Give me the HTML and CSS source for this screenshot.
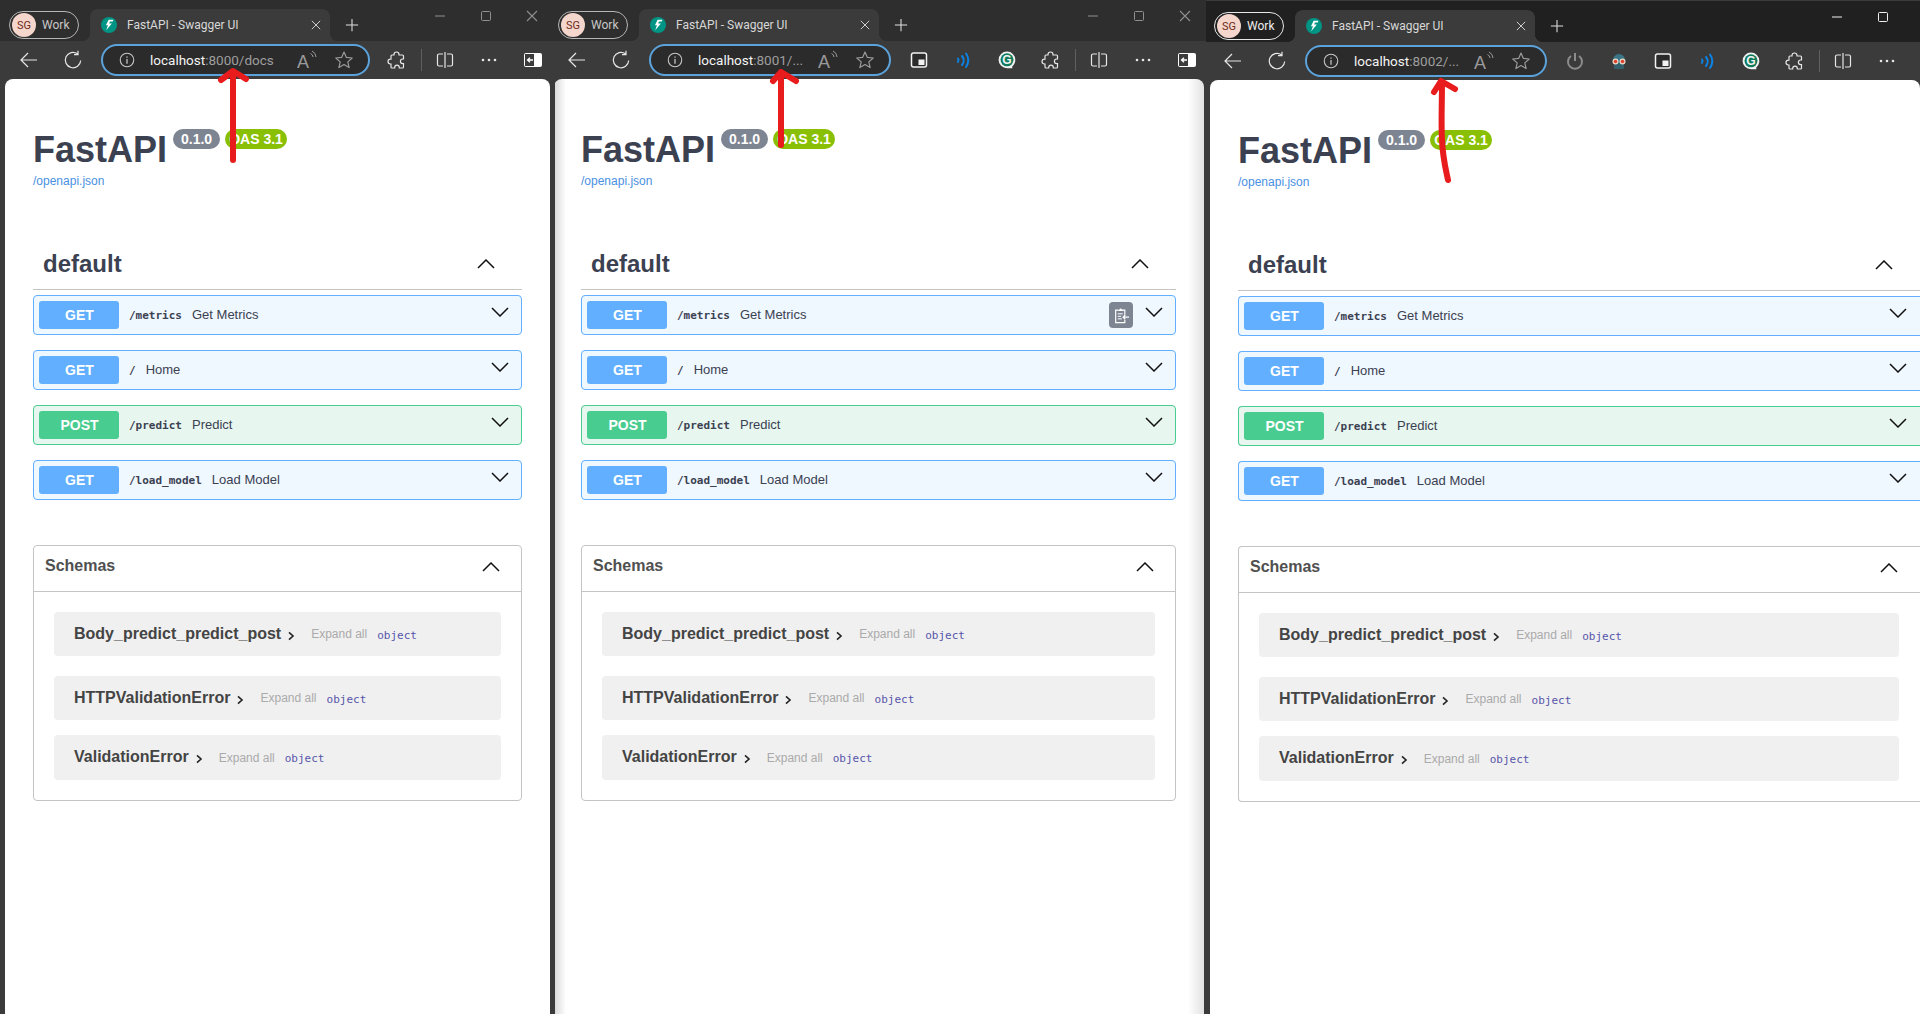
FILE: index.html
```html
<!doctype html>
<html>
<head>
	<meta charset="utf-8" />
	<title>FastAPI - Swagger UI</title>
	<link rel="stylesheet" href="styles.css">
</head>

<body>
	<svg class="sprite" xmlns="http://www.w3.org/2000/svg">
		<symbol id="i-back" viewBox="0 0 20 20"><path d="M18 10H2M9 3l-7 7 7 7" fill="none" stroke="currentColor" stroke-width="1.2"/></symbol>
		<symbol id="i-refresh" viewBox="0 0 20 20"><path d="M17.700 10.500A7.700 7.700 0 1 1 14.500 3.800M15 .8v3.800h-4" fill="none" stroke="currentColor" stroke-width="1.2"/></symbol>
		<symbol id="i-info" viewBox="0 0 20 20"><circle cx="10" cy="10" r="7.5" fill="none" stroke="currentColor" stroke-width="1.2"/><path d="M10 9v5.2M10 6v1.4" stroke="currentColor" stroke-width="1.4"/></symbol>
		<symbol id="i-read" viewBox="0 0 20 20"><text x="0" y="18" font-family="Liberation Sans" font-size="18" fill="currentColor">A</text><path d="M13.5 3.5a4 4 0 0 1 2.5 3.5M15 1a7 7 0 0 1 4 6" fill="none" stroke="currentColor"/></symbol>
		<symbol id="i-star" viewBox="0 0 20 20"><path d="M10 2l2.4 5.4 5.8.6-4.4 3.9 1.3 5.7L10 14.6l-5.1 3 1.3-5.7L1.800 8l5.800-.6z" fill="none" stroke="currentColor" stroke-width="1.2" stroke-linejoin="round"/></symbol>
		<symbol id="i-puzzle" viewBox="0 0 20 20"><path d="M7 4.500a2.500 2.500 0 0 1 5 0V5h3.500a1 1 0 0 1 1 1v3h-.8a2.300 2.300 0 0 0 0 4.600h.8V17a1 1 0 0 1-1 1h-3.200v-.6a2.300 2.300 0 0 0-4.600 0v.6H5a1 1 0 0 1-1-1v-3h-.6a2.400 2.400 0 0 1 0-4.800H4V6a1 1 0 0 1 1-1h2z" fill="none" stroke="currentColor" stroke-width="1.200"/></symbol>
		<symbol id="i-split" viewBox="0 0 20 20"><path d="M8 4H4a1.500 1.500 0 0 0-1.500 1.500v9A1.500 1.500 0 0 0 4 16h4M12 4h4a1.500 1.500 0 0 1 1.500 1.500v9A1.500 1.500 0 0 1 16 16h-4M10 2v16" fill="none" stroke="currentColor" stroke-width="1.200"/></symbol>
		<symbol id="i-dots" viewBox="0 0 20 20"><circle cx="4" cy="10" r="1.300" fill="currentColor"/><circle cx="10" cy="10" r="1.300" fill="currentColor"/><circle cx="16" cy="10" r="1.300" fill="currentColor"/></symbol>
		<symbol id="i-sidebar" viewBox="0 0 20 20"><rect x="1" y="3" width="18" height="14" rx="2" fill="#fff"/><rect x="2" y="4" width="9" height="12" fill="#3b3b3b"/><path d="M10 10H4.500M7 7.800 4.500 10 7 12.200" fill="none" stroke="#fff" stroke-width="1.300"/></symbol>
		<symbol id="i-pip" viewBox="0 0 20 20"><rect x="2.500" y="3" width="15" height="14" rx="2" fill="#2b2b2b" stroke="#f2f2f2" stroke-width="1.500"/><rect x="9.500" y="9.500" width="6" height="5.500" fill="#f2f2f2"/></symbol>
		<symbol id="i-wifi" viewBox="0 0 20 20"><path d="M5 8.500a3 3 0 0 1 0 3.500M9 6a7 7 0 0 1 0 9M13 3.500a11 11 0 0 1 0 13.500" fill="none" stroke="#0a84e8" stroke-width="2" stroke-linecap="round"/></symbol>
		<symbol id="i-grammarly" viewBox="0 0 20 20"><path d="M10 1.500a8.300 8.300 0 0 1 8.300 8.300 8.300 8.300 0 0 1-3 6.500v2H10a8.400 8.400 0 0 1 0-16.800z" fill="#f2f2f2"/><circle cx="10" cy="9.800" r="6.500" fill="#0f7a5c"/><text x="10" y="14" text-anchor="middle" font-family="Liberation Sans" font-weight="700" font-size="12" fill="#f2f2f2">G</text></symbol>
		<symbol id="i-power" viewBox="0 0 20 20"><path d="M6 5a7 7 0 1 0 8 0M10 2v8" fill="none" stroke="#8c8c8c" stroke-width="2"/></symbol>
		<symbol id="i-robot" viewBox="0 0 20 20"><path d="M4 9a6 6 0 0 1 12 0v3H4z" fill="#3a7486"/><rect x="5" y="12" width="10" height="6" rx="1" fill="#335e6c"/><circle cx="6.500" cy="10.500" r="3" fill="#e8dccb"/><circle cx="13.500" cy="10.500" r="3" fill="#e8dccb"/><circle cx="6.500" cy="10.500" r="1.800" fill="#e0432b"/><circle cx="13.500" cy="10.500" r="1.800" fill="#e0432b"/></symbol>
		<symbol id="i-fastapi" viewBox="0 0 20 20"><circle cx="10" cy="10" r="10" fill="#009485"/><path d="M9.500 3.500h6l-.8 2.200h-3.600l-.8 2.400h3.300L6.500 16.500l2.200-6.300H6.200z" fill="#fff"/></symbol>
		<symbol id="i-x" viewBox="0 0 12 12"><path d="M1 1l10 10M11 1 1 11" stroke="currentColor" stroke-width="1.100"/></symbol>
		<symbol id="i-plus" viewBox="0 0 16 16"><path d="M8 1v14M1 8h14" stroke="currentColor" stroke-width="1.200"/></symbol>
		<symbol id="i-min" viewBox="0 0 12 12"><path d="M1 6h10" stroke="currentColor"/></symbol>
		<symbol id="i-max" viewBox="0 0 12 12"><rect x="1.500" y="1.500" width="9" height="9" rx="1" fill="none" stroke="currentColor"/></symbol>
		<symbol id="i-down" viewBox="0 0 18 10"><path d="M1 1l8 8 8-8" fill="none" stroke="currentColor" stroke-width="1.500"/></symbol>
		<symbol id="i-up" viewBox="0 0 18 10"><path d="M1 9l8-8 8 8" fill="none" stroke="currentColor" stroke-width="1.500"/></symbol>
		<symbol id="i-more" viewBox="0 0 10 12"><path d="M2.500 1.500 7.500 6l-5 4.500" fill="none" stroke="currentColor" stroke-width="2"/></symbol>
		<symbol id="i-copy" viewBox="0 0 18 20"><path d="M5 3.500H2v15h11v-3.500M13 9V3.500h-3" fill="none" stroke="#fff" stroke-width="1.400"/><path d="M5 4.500V3h1.500a1.500 1.500 0 0 1 3 0H11v1.500z" fill="#fff"/><path d="M4.500 8h6M4.500 11h4M4.500 14h5" stroke="#fff" stroke-width="1.200"/><path d="M18 12h-7M13.500 9.500 11 12l2.500 2.500" fill="none" stroke="#fff" stroke-width="1.600"/></symbol>
	</svg>

	<main class="desktop">

		<section class="win win-a">
			<div class="strip">
				<div class="profile"><span class="avatar">SG</span>Work</div>
				<div class="tab">
					<svg class="favicon"><use href="#i-fastapi"/></svg>
					<span class="tab-title">FastAPI - Swagger UI</span>
					<svg class="tab-x"><use href="#i-x"/></svg>
				</div>
				<svg class="new-tab"><use href="#i-plus"/></svg>
				<div class="controls">
					<span><svg><use href="#i-min"/></svg></span>
					<span><svg><use href="#i-max"/></svg></span>
					<span><svg><use href="#i-x"/></svg></span>
				</div>
			</div>
			<div class="toolbar">
				<span class="tool"><svg><use href="#i-back"/></svg></span>
				<span class="tool"><svg><use href="#i-refresh"/></svg></span>
				<div class="addr">
					<svg class="addr-info"><use href="#i-info"/></svg>
					<span class="url">localhost<span class="url-dim">:8000/docs</span></span>
					<svg class="addr-read"><use href="#i-read"/></svg>
					<svg class="addr-star"><use href="#i-star"/></svg>
				</div>
				<span class="tool"><svg><use href="#i-puzzle"/></svg></span>
				<span class="sep"></span>
				<span class="tool"><svg><use href="#i-split"/></svg></span>
				<span class="tool"><svg><use href="#i-dots"/></svg></span>
				<span class="tool"><svg><use href="#i-sidebar"/></svg></span>
			</div>
			<div class="page">
				<div class="info">
					<h1>FastAPI</h1>
					<span class="stamp">0.1.0</span>
					<span class="stamp stamp-oas">OAS 3.1</span>
				</div>
				<a class="spec-link">/openapi.json</a>
				<div class="tag">
					<h2>default</h2>
					<svg class="chev-up"><use href="#i-up"/></svg>
				</div>
				<div class="op op-get"><span class="method">GET</span><code>/metrics</code><span class="desc">Get Metrics</span><svg class="chev-down"><use href="#i-down"/></svg></div>
				<div class="op op-get"><span class="method">GET</span><code>/</code><span class="desc">Home</span><svg class="chev-down"><use href="#i-down"/></svg></div>
				<div class="op op-post"><span class="method">POST</span><code>/predict</code><span class="desc">Predict</span><svg class="chev-down"><use href="#i-down"/></svg></div>
				<div class="op op-get"><span class="method">GET</span><code>/load_model</code><span class="desc">Load Model</span><svg class="chev-down"><use href="#i-down"/></svg></div>
				<div class="schemas">
					<div class="schemas-head">
						<h4>Schemas</h4>
						<svg class="chev-up"><use href="#i-up"/></svg>
					</div>
					<div class="schemas-body">
						<div class="model"><b>Body_predict_predict_post</b><svg class="more"><use href="#i-more"/></svg><span class="expand">Expand all</span><span class="type">object</span></div>
						<div class="model"><b>HTTPValidationError</b><svg class="more"><use href="#i-more"/></svg><span class="expand">Expand all</span><span class="type">object</span></div>
						<div class="model model-last"><b>ValidationError</b><svg class="more"><use href="#i-more"/></svg><span class="expand">Expand all</span><span class="type">object</span></div>
					</div>
				</div>
			</div>
		</section>

		<section class="win win-b">
			<div class="strip">
				<div class="profile"><span class="avatar">SG</span>Work</div>
				<div class="tab">
					<svg class="favicon"><use href="#i-fastapi"/></svg>
					<span class="tab-title">FastAPI - Swagger UI</span>
					<svg class="tab-x"><use href="#i-x"/></svg>
				</div>
				<svg class="new-tab"><use href="#i-plus"/></svg>
				<div class="controls">
					<span><svg><use href="#i-min"/></svg></span>
					<span><svg><use href="#i-max"/></svg></span>
					<span><svg><use href="#i-x"/></svg></span>
				</div>
			</div>
			<div class="toolbar">
				<span class="tool"><svg><use href="#i-back"/></svg></span>
				<span class="tool"><svg><use href="#i-refresh"/></svg></span>
				<div class="addr">
					<svg class="addr-info"><use href="#i-info"/></svg>
					<span class="url">localhost<span class="url-dim">:8001/...</span></span>
					<svg class="addr-read"><use href="#i-read"/></svg>
					<svg class="addr-star"><use href="#i-star"/></svg>
				</div>
				<span class="tool"><svg><use href="#i-pip"/></svg></span>
				<span class="tool"><svg><use href="#i-wifi"/></svg></span>
				<span class="tool"><svg><use href="#i-grammarly"/></svg></span>
				<span class="tool"><svg><use href="#i-puzzle"/></svg></span>
				<span class="sep"></span>
				<span class="tool"><svg><use href="#i-split"/></svg></span>
				<span class="tool"><svg><use href="#i-dots"/></svg></span>
				<span class="tool"><svg><use href="#i-sidebar"/></svg></span>
			</div>
			<div class="page">
				<div class="info">
					<h1>FastAPI</h1>
					<span class="stamp">0.1.0</span>
					<span class="stamp stamp-oas">OAS 3.1</span>
				</div>
				<a class="spec-link">/openapi.json</a>
				<div class="tag">
					<h2>default</h2>
					<svg class="chev-up"><use href="#i-up"/></svg>
				</div>
				<div class="op op-get"><span class="method">GET</span><code>/metrics</code><span class="desc">Get Metrics</span><span class="copy"><svg><use href="#i-copy"/></svg></span><svg class="chev-down"><use href="#i-down"/></svg></div>
				<div class="op op-get"><span class="method">GET</span><code>/</code><span class="desc">Home</span><svg class="chev-down"><use href="#i-down"/></svg></div>
				<div class="op op-post"><span class="method">POST</span><code>/predict</code><span class="desc">Predict</span><svg class="chev-down"><use href="#i-down"/></svg></div>
				<div class="op op-get"><span class="method">GET</span><code>/load_model</code><span class="desc">Load Model</span><svg class="chev-down"><use href="#i-down"/></svg></div>
				<div class="schemas">
					<div class="schemas-head">
						<h4>Schemas</h4>
						<svg class="chev-up"><use href="#i-up"/></svg>
					</div>
					<div class="schemas-body">
						<div class="model"><b>Body_predict_predict_post</b><svg class="more"><use href="#i-more"/></svg><span class="expand">Expand all</span><span class="type">object</span></div>
						<div class="model"><b>HTTPValidationError</b><svg class="more"><use href="#i-more"/></svg><span class="expand">Expand all</span><span class="type">object</span></div>
						<div class="model model-last"><b>ValidationError</b><svg class="more"><use href="#i-more"/></svg><span class="expand">Expand all</span><span class="type">object</span></div>
					</div>
				</div>
			</div>
		</section>

		<section class="win win-c">
			<div class="strip">
				<div class="profile"><span class="avatar">SG</span>Work</div>
				<div class="tab">
					<svg class="favicon"><use href="#i-fastapi"/></svg>
					<span class="tab-title">FastAPI - Swagger UI</span>
					<svg class="tab-x"><use href="#i-x"/></svg>
				</div>
				<svg class="new-tab"><use href="#i-plus"/></svg>
				<div class="controls">
					<span><svg><use href="#i-min"/></svg></span>
					<span><svg><use href="#i-max"/></svg></span>
				</div>
			</div>
			<div class="toolbar">
				<span class="tool"><svg><use href="#i-back"/></svg></span>
				<span class="tool"><svg><use href="#i-refresh"/></svg></span>
				<div class="addr">
					<svg class="addr-info"><use href="#i-info"/></svg>
					<span class="url">localhost<span class="url-dim">:8002/...</span></span>
					<svg class="addr-read"><use href="#i-read"/></svg>
					<svg class="addr-star"><use href="#i-star"/></svg>
				</div>
				<span class="tool"><svg><use href="#i-power"/></svg></span>
				<span class="tool"><svg><use href="#i-robot"/></svg></span>
				<span class="tool"><svg><use href="#i-pip"/></svg></span>
				<span class="tool"><svg><use href="#i-wifi"/></svg></span>
				<span class="tool"><svg><use href="#i-grammarly"/></svg></span>
				<span class="tool"><svg><use href="#i-puzzle"/></svg></span>
				<span class="sep"></span>
				<span class="tool"><svg><use href="#i-split"/></svg></span>
				<span class="tool"><svg><use href="#i-dots"/></svg></span>
			</div>
			<div class="page">
				<div class="info">
					<h1>FastAPI</h1>
					<span class="stamp">0.1.0</span>
					<span class="stamp stamp-oas">OAS 3.1</span>
				</div>
				<a class="spec-link">/openapi.json</a>
				<div class="tag">
					<h2>default</h2>
					<svg class="chev-up"><use href="#i-up"/></svg>
				</div>
				<div class="op op-get"><span class="method">GET</span><code>/metrics</code><span class="desc">Get Metrics</span><svg class="chev-down"><use href="#i-down"/></svg></div>
				<div class="op op-get"><span class="method">GET</span><code>/</code><span class="desc">Home</span><svg class="chev-down"><use href="#i-down"/></svg></div>
				<div class="op op-post"><span class="method">POST</span><code>/predict</code><span class="desc">Predict</span><svg class="chev-down"><use href="#i-down"/></svg></div>
				<div class="op op-get"><span class="method">GET</span><code>/load_model</code><span class="desc">Load Model</span><svg class="chev-down"><use href="#i-down"/></svg></div>
				<div class="schemas">
					<div class="schemas-head">
						<h4>Schemas</h4>
						<svg class="chev-up"><use href="#i-up"/></svg>
					</div>
					<div class="schemas-body">
						<div class="model"><b>Body_predict_predict_post</b><svg class="more"><use href="#i-more"/></svg><span class="expand">Expand all</span><span class="type">object</span></div>
						<div class="model"><b>HTTPValidationError</b><svg class="more"><use href="#i-more"/></svg><span class="expand">Expand all</span><span class="type">object</span></div>
						<div class="model model-last"><b>ValidationError</b><svg class="more"><use href="#i-more"/></svg><span class="expand">Expand all</span><span class="type">object</span></div>
					</div>
				</div>
			</div>
		</section>

	</main>

	<!-- hand drawn arrows on top of the screenshot -->
	<svg class="arrows" viewBox="0 0 1920 1014">
		<path d="M233 160V72M221 80l12-9 13 8"/>
		<path d="M781 145V72M773 81l8-9 15 9"/>
		<path d="M1448 180c-2-10-5-20-6-40s0-35 0-58M1434 92l7-11 14 8"/>
	</svg>
</body>
</html>
```

FILE: styles.css
```css
*, *::before, *::after {
	box-sizing: border-box;
}

html, body {
	margin: 0;
	padding: 0;
	height: 100%;
	overflow: hidden;
	background: #3a3a3a;
}

h1, h2, h4 {
	margin: 0;
}

.sprite {
	display: none;
}

.desktop {
	display: flex;
	width: 1920px;
	height: 1014px;
	overflow: hidden;
	font-family: "Liberation Sans", Arial, sans-serif;
}

/* windows */

.win {
	display: flex;
	flex-direction: column;
	flex: none;
	height: 100%;
	overflow: hidden;
	background: #3b3b3b;
}

.win-a {
	width: 555px;
}

.win-b {
	width: 651px;
}

.win-c {
	width: 714px;
	padding-top: 1px;
}

/* tab strip */

.strip {
	display: flex;
	align-items: center;
	flex: none;
	height: 41px;
	padding-top: 9px;
	background: #2e2e2e;
	font-family: Roboto, sans-serif;
}

.win-a .strip {
	padding-left: 9px;
}

.win-b .strip {
	padding-left: 3px;
}

.win-c .strip {
	padding-left: 8px;
	background: #202020;
}

.profile {
	display: flex;
	align-items: center;
	gap: 6px;
	flex: none;
	width: 70px;
	height: 28px;
	padding-left: 2px;
	border: 1px solid #b5b5b5;
	border-radius: 14px;
	color: #c8c8c8;
	font-size: 12px;
}

.win-c .profile {
	border-color: #e8e8e8;
	color: #eee;
}

.avatar {
	display: flex;
	align-items: center;
	justify-content: center;
	width: 24px;
	height: 24px;
	border-radius: 50%;
	background: #f4d6cc;
	color: #6f2c20;
	font-size: 11px;
}

.tab {
	position: relative;
	display: flex;
	align-items: center;
	flex: none;
	width: 240px;
	height: 32px;
	margin-left: 11px;
	padding: 0 9px 0 11px;
	border-radius: 8px 8px 0 0;
	background: #3b3b3b;
}

/* little flares where the tab meets the toolbar */
.tab::before,
.tab::after {
	content: "";
	position: absolute;
	bottom: 0;
	width: 8px;
	height: 8px;
}

.tab::before {
	left: -8px;
	background: radial-gradient(circle at 0 0, transparent 8px, #3b3b3b 8px);
}

.tab::after {
	right: -8px;
	background: radial-gradient(circle at 100% 0, transparent 8px, #3b3b3b 8px);
}

.favicon {
	flex: none;
	width: 16px;
	height: 16px;
}

.tab-title {
	flex: 1;
	margin-left: 10px;
	color: #d8d8d8;
	font-size: 12px;
}

.tab-x {
	flex: none;
	width: 10px;
	height: 10px;
	color: #ddd;
}

.new-tab {
	flex: none;
	width: 14px;
	height: 14px;
	margin-left: 15px;
	color: #e0e0e0;
}

.controls {
	display: flex;
	align-self: flex-start;
	margin-left: auto;
	color: #8f8f8f;
}

.win-b .controls {
	margin-right: -2px;
}

.win-c .controls {
	margin-right: 14px;
	color: #f0f0f0;
}

.controls span {
	display: flex;
	align-items: center;
	justify-content: center;
	width: 46px;
	height: 14px;
}

.controls svg {
	width: 12px;
	height: 12px;
}

/* toolbar */

.toolbar {
	display: flex;
	align-items: center;
	flex: none;
	height: 38px;
	color: #e6e6e6;
}

.win-a .toolbar {
	padding-left: 7px;
}

.win-c .toolbar {
	padding-left: 5px;
}

.tool {
	display: flex;
	align-items: center;
	justify-content: center;
	flex: none;
	width: 44px;
	height: 30px;
}

.tool svg {
	width: 20px;
	height: 20px;
}

.sep {
	flex: none;
	width: 1px;
	height: 22px;
	margin: 0 1px 0 2px;
	background: #5f5f5f;
}

.addr {
	display: flex;
	align-items: center;
	flex: none;
	width: 242px;
	height: 32px;
	margin: 0 6px;
	border: 2px solid #5ba3dc;
	border-radius: 16px;
	background: #2b2b2b;
	color: #c8c8c8;
}

.win-a .addr {
	width: 269px;
	margin-right: 5px;
}

.addr-info {
	flex: none;
	width: 18px;
	height: 18px;
	margin-left: 15px;
}

.url {
	margin-left: 14px;
	color: #f4f4f4;
	font: 13.5px Roboto, sans-serif;
	white-space: nowrap;
}

.url-dim {
	color: #9e9e9e;
}

.addr-read {
	flex: none;
	width: 20px;
	height: 20px;
	margin-left: auto;
	color: #9a9a9a;
}

.addr-star {
	flex: none;
	width: 20px;
	height: 20px;
	margin: 0 14px 0 17px;
	color: #9a9a9a;
}

/* swagger page */

.page {
	flex: 1;
	padding: 50px 28px 0;
	border-radius: 8px 8px 0 0;
	background: #fff;
}

.win-a .page {
	margin: 0 5px;
}

.win-b .page {
	margin: 0 2px 0 -1px;
	padding-left: 27px;
	background: linear-gradient(90deg, #d8d8d8, #fff 12px, #fff calc(100% - 16px), #e2e2e2);
}

.win-c .page {
	margin-left: 4px;
	padding-right: 0;
}

.info {
	display: flex;
	align-items: flex-start;
}

h1 {
	margin-right: 6px;
	color: #3b4151;
	font-size: 36px;
	line-height: 42px;
}

.stamp {
	display: flex;
	align-items: center;
	justify-content: center;
	width: 47px;
	height: 20px;
	border-radius: 10px;
	background: #7d8492;
	color: #fff;
	font-size: 14px;
	font-weight: 700;
}

.stamp-oas {
	width: 62px;
	margin-left: 5px;
	background: #89bf04;
}

.spec-link {
	display: block;
	margin-top: 3px;
	color: #4990e2;
	font-size: 12px;
	line-height: 14px;
}

.tag {
	display: flex;
	align-items: center;
	justify-content: space-between;
	height: 41px;
	margin: 61px 0 5px;
	padding: 0 27px 10px 10px;
	border-bottom: 1px solid #c4c4c4;
}

h2 {
	color: #3b4151;
	font-size: 24px;
	line-height: 28px;
}

.chev-up {
	width: 18px;
	height: 10px;
	color: #111;
}

.op {
	display: flex;
	align-items: center;
	height: 40px;
	margin-bottom: 15px;
	padding: 0 12px 0 5px;
	border: 1px solid #61affe;
	border-radius: 4px;
	background: #eff7ff;
	color: #3b4151;
}

.op-post {
	border-color: #49cc90;
	background: #e8f6f0;
}

.method {
	flex: none;
	width: 80px;
	height: 28px;
	padding-left: 1px;
	border-radius: 3px;
	background: #61affe;
	color: #fff;
	font-size: 14px;
	font-weight: 700;
	line-height: 28px;
	text-align: center;
}

.op-post .method {
	background: #49cc90;
}

code {
	margin: 0 10px;
	font: 700 11px "DejaVu Sans Mono", monospace;
}

.desc {
	flex: 1;
	margin-top: -2px;
	font-size: 13px;
}

.chev-down {
	flex: none;
	width: 18px;
	height: 10px;
	margin-bottom: 6px;
	color: #111;
}

.copy {
	display: flex;
	align-items: center;
	justify-content: center;
	flex: none;
	width: 24px;
	height: 26px;
	margin-right: 12px;
	border-radius: 4px;
	background: #7d8492;
}

.copy svg {
	width: 15px;
	height: 17px;
}

.schemas {
	margin-top: 45px;
	border: 1px solid #c4c4c4;
	border-radius: 4px;
}

.schemas-head {
	display: flex;
	align-items: center;
	justify-content: space-between;
	height: 46px;
	padding: 0 21px 0 11px;
	border-bottom: 1px solid #c4c4c4;
}

h4 {
	margin-top: -5px;
	color: #505050;
	font-size: 16px;
}

.schemas-head .chev-up {
	margin-top: -4px;
}

.schemas-body {
	padding: 20px 20px 20px;
}

.model {
	display: flex;
	align-items: center;
	height: 44px;
	margin-bottom: 20px;
	padding-left: 20px;
	border-radius: 4px;
	background: #f0f0f0;
}

.model:nth-child(2) {
	margin-bottom: 15px;
}

.model-last {
	height: 45px;
	margin-bottom: 0;
}

.model b {
	color: #444;
	font-size: 16px;
}

.model-last b {
	margin-top: -2px;
}

.more {
	flex: none;
	width: 8px;
	height: 10px;
	margin: 3px 16px 0 6px;
	color: #222;
}

.expand {
	color: #aaa;
	font-size: 12px;
}

.type {
	margin: 2px 0 0 10px;
	color: #55a;
	font: 11px "DejaVu Sans Mono", monospace;
}

.win-c .op,
.win-c .schemas {
	border-right: 0;
	border-radius: 4px 0 0 4px;
}

.win-c .op {
	padding-right: 13px;
}

.win-c .schemas-head {
	padding-right: 22px;
}

.win-c .schemas-body {
	padding-right: 21px;
}

/* overlay */

.arrows {
	position: absolute;
	top: 0;
	left: 0;
	width: 1920px;
	height: 1014px;
	fill: none;
	stroke: #e81c1c;
	stroke-width: 6;
	stroke-linecap: round;
	stroke-linejoin: round;
}
```
